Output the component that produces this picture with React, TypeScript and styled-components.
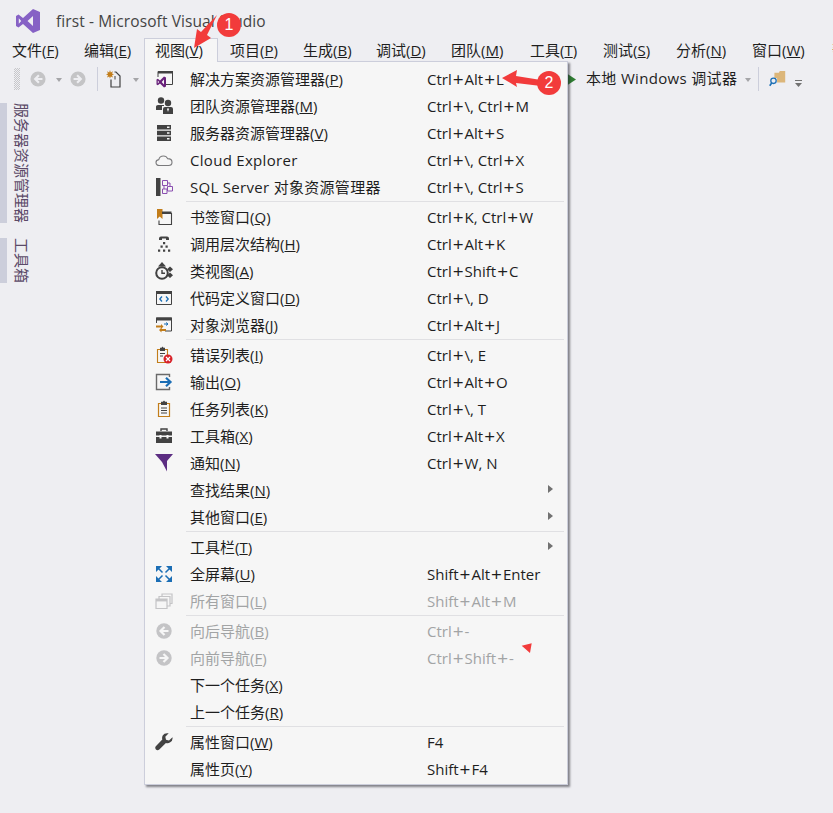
import React from "react";
import styled, { createGlobalStyle } from "styled-components";

const Global = createGlobalStyle`
  html, body { margin: 0; padding: 0; background: #eeeef2; }
  #root { width: 833px; height: 813px; }
`;
const FONT = `"Open Sans", "Noto Sans CJK SC", sans-serif`;

const Page = styled.div`
  position: relative; width: 833px; height: 813px; overflow: hidden;
  background: #eeeef2; color: #1e1e1e; font-family: ${FONT}; font-size: 15px;
`;
const TitleBar = styled.div`
  height: 38px; display: flex; align-items: center; padding: 4px 0 0 16px; box-sizing: border-box; gap: 16px;
`;
const Title = styled.div`color: #444; font-size: 15.5px; letter-spacing: 0.1px;`;
const MenuBar = styled.div`height: 24px; display: flex; white-space: nowrap; overflow: hidden; position: relative; z-index: 3;`;
const TopItem = styled.div<{ $open?: boolean; $w: number }>`
  box-sizing: border-box; width: ${p => p.$w}px; flex: none; height: 24px;
  padding-left: ${p => (p.$open ? 10 : 12)}px; line-height: 24px;
  ${p => p.$open && `background:#f6f6f6;border:1px solid #cccedb;border-bottom:none;line-height:22px;`}
`;
const Toolbar = styled.div`height: 34px; display: flex; align-items: center; padding: 0 0 0 14px; box-sizing: border-box; white-space: nowrap;`;
const Grip = styled.div`
  width: 6px; height: 22px; margin-right: 10px;
  background-image: conic-gradient(#c6c6ca 25%, transparent 0 50%, #c6c6ca 0 75%, transparent 0);
  background-size: 2px 2px;
`;
const Caret = styled.div<{ $ml: number; $mr: number; $c?: string }>`
  width: 0; height: 0; margin: 1px ${p => p.$mr}px 0 ${p => p.$ml}px;
  border-left: 3.5px solid transparent; border-right: 3.5px solid transparent; border-top: 4px solid ${p => p.$c || "#a5a5a8"};
`;
const ToolSep = styled.div<{ $ml: number; $mr: number }>`
  width: 1px; height: 24px; background: #cccedb; margin: 0 ${p => p.$mr}px 0 ${p => p.$ml}px;
`;
const ToolIcon = styled.svg<{ $ml?: number; $mt?: number }>`
  flex: none; margin-left: ${p => p.$ml || 0}px; margin-top: ${p => p.$mt || 0}px; display: block;
`;
const Debugger = styled.div`margin: -3px 0 0 10px; font-size: 15px; letter-spacing: 0.33px;`;
const Rail = styled.div`display: flex; flex-direction: column; gap: 15px; padding-top: 7px;`;
const SideTab = styled.div`
  box-sizing: border-box; width: 30px; border-left: 7px solid #cccedb; padding-left: 5px;
  writing-mode: vertical-rl; text-orientation: sideways; line-height: 16px; font-size: 15px; color: #5b4a68;
  font-family: "Noto Sans CJK SC", sans-serif;
`;
const Menu = styled.div`
  position: absolute; left: 144px; top: 61px; width: 424px; box-sizing: border-box; z-index: 2;
  background: #f6f6f6; border: 1px solid #cccedb; padding: 3px 0 2px;
  box-shadow: 2px 2px 2px rgba(40,40,50,.55);
`;
const Row = styled.div<{ $off?: boolean }>`
  position: relative; height: 27px; display: grid; grid-template-columns: 45px 237px 1fr; align-items: center;
  color: ${p => (p.$off ? "#a2a4a5" : "#1e1e1e")}; white-space: nowrap;
`;
const IconSlot = styled.div`padding-left: 10px; height: 18px; svg { display: block; }`;
const Chevron = styled.span`
  position: absolute; left: 403px; top: 9px; width: 0; height: 0;
  border-top: 4px solid transparent; border-bottom: 4px solid transparent; border-left: 5px solid #717171;
`;
const Sep = styled.div`height: 1px; margin: 1px 3px 1px 41px; background: #e0e0e3;`;
const LabelText = styled.span<{ $wide?: boolean }>`letter-spacing: ${p => (p.$wide ? "0.3px" : "0")};`;
const Plus = styled.span`font-size: 19px; line-height: 1px; margin: 0 1px; vertical-align: -1px;`;
const Overlay = styled.svg`position: absolute; left: 0; top: 0; z-index: 4; pointer-events: none;`;
const Badge = styled.div<{ $x: number; $y: number }>`
  position: absolute; z-index: 5; left: ${p => p.$x}px; top: ${p => p.$y}px; width: 24px; height: 24px; border-radius: 50%;
  background: #f23b3b; color: #fff; font: 16px/24px "Liberation Sans", sans-serif; text-align: center;
`;

const I: React.FC<{ children: React.ReactNode }> = ({ children }) => (
  <svg width="18" height="18" viewBox="0 0 18 18" fill="none">{children}</svg>
);
const D = "#424242", P = "#68217a", O = "#c27d1a", B = "#1b6eb5", G = "#c4c4c6";

const icons: Record<string, React.ReactNode> = {
  sol: <I><path d="M3 7V1.500h14.500v13H11" stroke={D} /><path d="M3 1h15v2.500H3z" fill={D} /><path d="M9 6.500l-4 4-2.200-1.700-1.300.7v5l1.300.7L5 13.500l4 4 2-1v-9z" fill={P} /><path d="M9 9.500L6.700 12 9 14.500zM2.800 10.500v3l1.300-1.500z" fill="#f6f6f6" /></I>,
  team: <I><circle cx="6" cy="3.500" r="3.200" fill={D} /><circle cx="13" cy="6" r="3.200" fill={D} /><path d="M1 13V9.500q0-1.500 2-1.500h6v1H7v4z" fill={D} /><path d="M8 17v-5q0-2 2-2h6q2 0 2 2v5z" fill={D} /><path d="M13 11l-1 1 1 3 1-3z" fill="#f6f6f6" /></I>,
  server: <I><path d="M2 1h14v4.600H2zM2 6.700h14v4.600H2zM2 12.400H16V17H2z" fill={D} /><path d="M12 2.500h2.500v1.500H12zM12 8.200h2.500v1.500H12zM12 14h2.500v1.500H12z" fill="#f6f6f6" /></I>,
  cloud: <I><path d="M4.500 14.500Q1 14.500 1 11.500 1 9 3.800 8.600 4.600 5 8.500 5 11.500 5 12.600 7.600 17 7.600 17 11.200 17 14.500 13.500 14.500z" stroke="#7a7a7c" strokeWidth="1.100" /></I>,
  sql: <I><path d="M1 0h4.500v18H1z" fill={D} /><path d="M7.500 2.500h5v5h-5zM12.500 8.500h5v4.500h-5zM7.500 11h4.500v4.500H7.500zM9 7.500V11M12.500 5H15v3.500" stroke="#8a4fb0" strokeWidth="1" /></I>,
  mark: <I><path d="M7 5.500h9.500v11H4v-4" stroke={D} strokeWidth="1.100" /><path d="M2 1h5.500v10L4.700 8.600 2 11z" fill={O} /><path d="M7 3.500h9.500v2.500H7z" fill={D} /></I>,
  call: <I><path d="M4 5V3.500Q4 1.500 6 1.500h6Q14 1.500 14 3.500V5h-3V3.600H7V5z" fill={D} /><path d="M8 7h2.200v2.200H8zM5.500 10.500h2.200v2.200h-2.200zM10.500 10.500h2.200v2.200h-2.200zM3 14.500h2.200v2.200H3zM8 14.500h2.200v2.200H8zM13 14.500h2.200v2.200H13z" fill={D} /></I>,
  klass: <I><circle cx="7" cy="11" r="5.800" stroke={D} strokeWidth="2" /><path d="M7 8v3.300h3" stroke={D} strokeWidth="1.400" /><path d="M7 0l4 4.500H3z" fill={D} /><path d="M15 4.500l3 2.700-3 2.700-3-2.700zM15 10.500l3 2.700-3 2.700-3-2.700z" fill={D} /></I>,
  code: <I><path d="M1.500 2.500h15v13h-15z" stroke={D} /><path d="M1 2h16v3H1z" fill={D} /><path d="M7 7.500L4.800 10 7 12.500M11 7.500l2.200 2.500-2.200 2.500" stroke={B} strokeWidth="1.300" /></I>,
  obj: <I><path d="M1.500 7V2h15v13H10" stroke={D} /><path d="M1 1.500h16v3H1z" fill={D} /><path d="M1 9.500h5V8l2.500 2.500L6 13v-1.500H1z" fill={O} /><path d="M11 13H6.500v-1.500L4 14l2.500 2.500V15H11z" fill={O} /><path d="M9 8h4M11 6.500l2 1.500-2 1.500" stroke={B} /></I>,
  err: <I><path d="M2.500 3.500h10v13h-10z" stroke={O} strokeWidth="1.100" /><path d="M5 3.500V1.800h1.500L7.500.5 8.500 1.800H10v3.200H5z" fill={D} /><path d="M5 7.500h5M5 10h3" stroke={D} /><circle cx="13" cy="13" r="4.500" fill="#d8232a" /><path d="M11 11l4 4M15 11l-4 4" stroke="#fff" strokeWidth="1.200" /></I>,
  out: <I><path d="M14.500 4V1.500h-13v15h13V14" stroke="#6a6a6a" strokeWidth="1.400" /><path d="M5 9h10M11 4.800L15.500 9 11 13.200" stroke={B} strokeWidth="2.200" /></I>,
  task: <I><path d="M3.500 3.500h11v13h-11z" stroke={O} strokeWidth="1.200" /><path d="M6 3.500V1.800h1.800L9 .5l1.200 1.300H12v3.200H6z" fill={D} /><path d="M6 8h6M6 10.500h6M6 13h6" stroke={D} /></I>,
  box: <I><path d="M6 4V2h6v2" stroke={D} strokeWidth="1.400" /><path d="M1 4.500h16v4H1zM1 10h16v6H1z" fill={D} /><path d="M4.500 8h2v3.500h-2zM11.500 8h2v3.500h-2z" fill="#f6f6f6" /></I>,
  notify: <I><path d="M0 0h18l-6 7v10.500L7 8z" fill="#5c2d82" /></I>,
  full: <I><path fill={B} d="M1 1h6L1 7zM17 1v6l-6-6zM1 17v-6l6 6zM17 17h-6l6-6z" /><path stroke={B} strokeWidth="1.500" d="M3 3l4.500 4.500M15 3l-4.500 4.500M3 15l4.500-4.500M15 15l-4.500-4.500" /></I>,
  all: <I><g stroke={G} strokeWidth="1.200"><path d="M1 7h11v9.500H1z" /><path d="M4 7V4.500h11V14h-3M7 4.500V2h10v9.500h-2" /></g><path d="M1 7h11v2.400H1z" fill={G} /></I>,
  back: <I><circle cx="9" cy="9" r="7.700" fill={G} /><path d="M13.500 9H6M9.500 5L5.500 9l4 4" stroke="#f6f6f6" strokeWidth="2.200" /></I>,
  fwd: <I><circle cx="9" cy="9" r="7.700" fill={G} /><path d="M4.500 9H12M8.500 5l4 4-4 4" stroke="#f6f6f6" strokeWidth="2.200" /></I>,
  wrench: <I><path d="M17.500 4.200L14 7.500l-3-.8-.7-3L13.700.3Q9.500-.5 7.700 2.600 6.700 4.600 7.300 6.600L.8 13.200Q-.4 15 .9 16.500 2.600 17.800 4.300 16.500L10.900 9.900Q13.200 10.600 15.200 9.300 18 7.400 17.500 4.200z" fill={D} /></I>,
};

type RowData = { t: string; k: string; s?: string; i?: string; off?: boolean; sub?: boolean; wide?: boolean };
const groups: RowData[][] = [
  [
    { t: "解决方案资源管理器", k: "P", s: "Ctrl+Alt+L", i: "sol" },
    { t: "团队资源管理器", k: "M", s: "Ctrl+\\, Ctrl+M", i: "team" },
    { t: "服务器资源管理器", k: "V", s: "Ctrl+Alt+S", i: "server" },
    { t: "Cloud Explorer", k: "", s: "Ctrl+\\, Ctrl+X", i: "cloud", wide: true },
    { t: "SQL Server 对象资源管理器", k: "", s: "Ctrl+\\, Ctrl+S", i: "sql", wide: true },
  ],
  [
    { t: "书签窗口", k: "Q", s: "Ctrl+K, Ctrl+W", i: "mark" },
    { t: "调用层次结构", k: "H", s: "Ctrl+Alt+K", i: "call" },
    { t: "类视图", k: "A", s: "Ctrl+Shift+C", i: "klass" },
    { t: "代码定义窗口", k: "D", s: "Ctrl+\\, D", i: "code" },
    { t: "对象浏览器", k: "J", s: "Ctrl+Alt+J", i: "obj" },
  ],
  [
    { t: "错误列表", k: "I", s: "Ctrl+\\, E", i: "err" },
    { t: "输出", k: "O", s: "Ctrl+Alt+O", i: "out" },
    { t: "任务列表", k: "K", s: "Ctrl+\\, T", i: "task" },
    { t: "工具箱", k: "X", s: "Ctrl+Alt+X", i: "box" },
    { t: "通知", k: "N", s: "Ctrl+W, N", i: "notify" },
    { t: "查找结果", k: "N", sub: true },
    { t: "其他窗口", k: "E", sub: true },
  ],
  [
    { t: "工具栏", k: "T", sub: true },
    { t: "全屏幕", k: "U", s: "Shift+Alt+Enter", i: "full" },
    { t: "所有窗口", k: "L", s: "Shift+Alt+M", i: "all", off: true },
  ],
  [
    { t: "向后导航", k: "B", s: "Ctrl+-", i: "back", off: true },
    { t: "向前导航", k: "F", s: "Ctrl+Shift+-", i: "fwd", off: true },
    { t: "下一个任务", k: "X" },
    { t: "上一个任务", k: "R" },
  ],
  [
    { t: "属性窗口", k: "W", s: "F4", i: "wrench" },
    { t: "属性页", k: "Y", s: "Shift+F4" },
  ],
];

const top: [string, string, number][] = [
  ["文件", "F", 72], ["编辑", "E", 72], ["视图", "V", 74], ["项目", "P", 73], ["生成", "B", 73], ["调试", "D", 75],
  ["团队", "M", 79], ["工具", "T", 73], ["测试", "S", 73], ["分析", "N", 76], ["窗口", "W", 80], ["帮助", "H", 80],
];

const Label: React.FC<{ t: string; k: string; wide?: boolean }> = ({ t, k, wide }) => (
  <LabelText $wide={wide}>{t}{k && <>(<u>{k}</u>)</>}</LabelText>
);
const Shortcut: React.FC<{ s?: string }> = ({ s }) => (
  <span>
    {(s || "").split("+").map((part, i) => (
      <React.Fragment key={i}>{i > 0 && <Plus>+</Plus>}{part}</React.Fragment>
    ))}
  </span>
);

export default function App() {
  return (
    <Page>
      <Global />
      <TitleBar>
        <svg width="24" height="24" viewBox="0 0 24 24">
          <path fillRule="evenodd" fill="#8661c5" d="M17 0l7 3v18l-7 3L7 15l-4.500 3.500L0 17V7l2.500-1.500L7 9zM17 7l-5.500 5 5.500 5zM2.800 9.200v5.600L5.200 12z" />
        </svg>
        <Title>first - Microsoft Visual Studio</Title>
      </TitleBar>
      <MenuBar>
        {top.map(([t, k, w]) => (
          <TopItem key={t} $w={w} $open={t === "视图"}>
            <Label t={t} k={k} />
          </TopItem>
        ))}
      </MenuBar>
      <Toolbar>
        <Grip />
        <ToolIcon width="16" height="16" viewBox="0 0 18 18"><circle cx="9" cy="9" r="8.500" fill="#c4c4c6" /><path d="M14 9H6M10 4.800L5.800 9l4.200 4.200" stroke="#eeeef2" strokeWidth="2.400" fill="none" /></ToolIcon>
        <Caret $ml={10} $mr={8} />
        <ToolIcon width="16" height="16" viewBox="0 0 18 18"><circle cx="9" cy="9" r="8.500" fill="#c4c4c6" /><path d="M4 9h8M8 4.800L12.200 9 8 13.200" stroke="#eeeef2" strokeWidth="2.400" fill="none" /></ToolIcon>
        <ToolSep $ml={11} $mr={8} />
        <ToolIcon width="18" height="18" viewBox="0 0 18 18"><path d="M5 9.500V17h9V6l-4-4H8.500" stroke="#424242" strokeWidth="1.200" fill="none" /><path d="M9 9.500V6" stroke="#424242" /><path d="M4 0l.8 2.400L7 1.300 6 3.500 8 4.300 6 5.200l1 2.200-2.200-1L4 8.500 3.200 6.400 1 7.400 2 5.200 0 4.300 2 3.500 1 1.300l2.200 1.100z" fill="#c27d1a" /></ToolIcon>
        <Caret $ml={9} $mr={0} />
        <ToolIcon width="10" height="13" viewBox="0 0 10 13" $ml={427}><path d="M0 0l10 6.500L0 13z" fill="#2f7d32" /></ToolIcon>
        <Debugger>本地 Windows 调试器</Debugger>
        <Caret $ml={8} $mr={0} />
        <ToolSep $ml={7} $mr={10} />
        <ToolIcon width="18" height="20" viewBox="0 0 20 20"><path d="M6 3h5l1-2h6v13H9V9H6z" fill="#dcb67a" /><circle cx="5" cy="12" r="3" fill="none" stroke="#1b6eb5" strokeWidth="1.400" /><path d="M3 14.500L.8 17.500" stroke="#1b6eb5" strokeWidth="1.800" /></ToolIcon>
        <ToolIcon width="9" height="8" viewBox="0 0 9 8" $ml={7} $mt={9}><path d="M1 0h7v1H1zM1 3h7L4.500 7z" fill="#717171" /></ToolIcon>
      </Toolbar>
      <Rail>
        <SideTab>服务器资源管理器</SideTab>
        <SideTab>工具箱</SideTab>
      </Rail>
      <Menu>
        {groups.map((g, gi) => (
          <React.Fragment key={gi}>
            {gi > 0 && <Sep />}
            {g.map(r => (
              <Row key={r.t} $off={r.off}>
                <IconSlot>{r.i && icons[r.i]}</IconSlot>
                <Label t={r.t} k={r.k} wide={r.wide} />
                <Shortcut s={r.s} />
                {r.sub && <Chevron />}
              </Row>
            ))}
          </React.Fragment>
        ))}
      </Menu>
      <Overlay width="833" height="813" viewBox="0 0 833 813">
        <path fill="#f23b3b" d="M217 15L207 35l4 3-17 10 3-19 4 3zM502 78l15-8-1 6 25 4v6l-25-3 1 4zM521.700 645.700l10-2.400L530 653z" />
      </Overlay>
      <Badge $x={217} $y={13}>1</Badge>
      <Badge $x={537} $y={71}>2</Badge>
    </Page>
  );
}
